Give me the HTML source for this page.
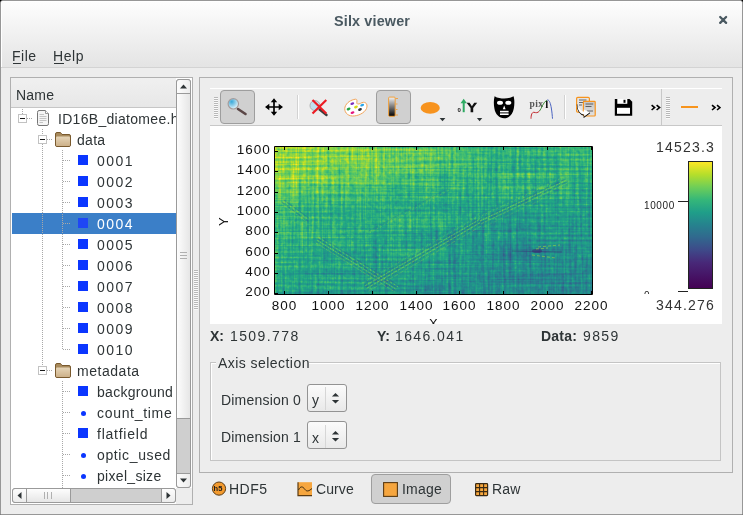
<!DOCTYPE html>
<html><head><meta charset="utf-8">
<style>
*{margin:0;padding:0;box-sizing:border-box}
html,body{width:743px;height:515px;overflow:hidden;background:#000}
body{font-family:"Liberation Sans",sans-serif;font-size:14px;color:#2e3436;position:relative}
.a{position:absolute}
.t{position:absolute;white-space:nowrap;line-height:1;will-change:transform}
.sq{position:absolute;width:10px;height:10px;background:#0b36ff}
.dot{position:absolute;width:5px;height:5px;border-radius:50%;background:#0b36ff}
.dv{position:absolute;width:1px;background:repeating-linear-gradient(#a8a8a8 0 1px,transparent 1px 2px)}
.dh{position:absolute;height:1px;background:repeating-linear-gradient(90deg,#a8a8a8 0 1px,transparent 1px 2px)}
.exp{position:absolute;width:9px;height:9px;border:1px solid #c2c2c2;background:#fff}
.exp:after{content:"";position:absolute;left:1px;top:3px;width:5px;height:1px;background:#1a1a1a}
.btnc{position:absolute;background:#d0d0d0;border:1px solid #9e9e9e;border-radius:4px}
.grip{position:absolute;background:repeating-linear-gradient(#b8b8b8 0 1px,#fafafa 1px 2px)}
.tsep{position:absolute;width:2px;background:linear-gradient(90deg,#d2d2d2 0 1px,#fff 1px 2px)}
</style></head><body>

<div class="a" style="left:0;top:0;width:743px;height:515px;background:#ededed;border:1px solid #979797;border-radius:3px 3px 0 0;overflow:hidden"><div class="a" style="left:0;top:0;width:741px;height:66px;background:linear-gradient(#fdfdfd,#e4e4e4);border-top:1px solid #fff;border-left:1px solid #fff"></div><div class="a" style="left:0;top:66px;width:741px;height:1px;background:#d3d3d3"></div></div>
<div class="t" style="left:334px;top:14px;font-weight:bold;font-size:14.4px;color:#4a5961;letter-spacing:0.15px">Silx viewer</div>
<svg class="a" style="left:718px;top:15px" width="11" height="10" viewBox="0 0 11 10"><path d="M2.2 2L8.1 7.9M8.1 2L2.2 7.9" stroke="#4a5961" stroke-width="2.3" stroke-linecap="round"/></svg>
<div class="t" style="left:12px;top:49px;letter-spacing:0.5px">File</div><div class="a" style="left:13px;top:63px;width:8px;height:1px;background:#2e3436"></div>
<div class="t" style="left:53px;top:49px;letter-spacing:0.6px">Help</div><div class="a" style="left:54px;top:63px;width:10px;height:1px;background:#2e3436"></div>
<div class="a" style="left:10px;top:77px;width:183px;height:428px;background:#fff;border:1px solid #b0b0b0"></div>
<div class="a" style="left:11px;top:78px;width:165px;height:30px;background:linear-gradient(#f0f0f0,#e7e7e7);border-bottom:1px solid #c6c6c6"></div>
<div class="t" style="left:16px;top:88px;letter-spacing:0.2px">Name</div>
<div class="a" style="left:11px;top:108px;width:165px;height:380px;overflow:hidden">
<div class="a" style="left:1px;top:105px;width:164px;height:21px;background:#3b7fc8"></div>
<div class="dv" style="left:11px;top:1px;width:1px;height:5px;"></div>
<div class="dh" style="left:16px;top:10px;width:6px;height:1px;"></div>
<div class="dv" style="left:31px;top:21px;width:1px;height:6px;"></div>
<div class="dv" style="left:31px;top:36px;width:1px;height:222px;"></div>
<div class="dv" style="left:51px;top:42px;width:1px;height:200px;"></div>
<div class="dv" style="left:51px;top:273px;width:1px;height:110px;"></div>
<svg class="a" style="left:25px;top:2px" width="14" height="16" viewBox="0 0 14 16"><defs><linearGradient id="fg" x1="0" y1="0" x2="0" y2="1"><stop offset="0" stop-color="#e6d5b8"/><stop offset="1" stop-color="#cdb189"/></linearGradient></defs><path d="M1.5 2.5Q1.5 0.5 3 0.5H9.5L12.5 3.5V13.5Q12.5 15.5 11 15.5H3Q1.5 15.5 1.5 13.5Z" fill="#f5f5f5" stroke="#757575"/><path d="M9.5 0.5V3.5H12.5" fill="#fff" stroke="#999"/><path d="M3.5 4.5H8M3.5 6.5H10.5M3.5 8.5H10.5M3.5 10.5H10.5M3.5 12.5H7" stroke="#c4c4c4"/></svg>
<div class="exp" style="left:7px;top:6px"></div>
<div class="t" style="left:47px;top:4px;color:#2e3436;letter-spacing:0.3px">ID16B_diatomee.h5</div>
<div class="exp" style="left:27px;top:27px"></div>
<div class="dh" style="left:36px;top:31px;width:6px;height:1px;"></div>
<svg class="a" style="left:44px;top:24px" width="16" height="15" viewBox="0 0 16 15"><path d="M0.5 2Q0.5 0.5 2 0.5H5.5L7 2.5H14Q15.5 2.5 15.5 4V13Q15.5 14.5 14 14.5H2Q0.5 14.5 0.5 13Z" fill="#a88a5c" stroke="#7a5a2e"/><path d="M1 5.5Q1 4.5 2 4.5H14Q15 4.5 15 5.5V13Q15 14 14 14H2Q1 14 1 13Z" fill="url(#fg)"/></svg>
<div class="t" style="left:66px;top:25px;color:#2e3436;letter-spacing:0.3px">data</div>
<div class="dh" style="left:52px;top:52px;width:8px;height:1px;"></div>
<div class="sq" style="left:67px;top:47px;background:#0b36ff"></div>
<div class="t" style="left:86px;top:46px;color:#2e3436;letter-spacing:1.5px">0001</div>
<div class="dh" style="left:52px;top:73px;width:8px;height:1px;"></div>
<div class="sq" style="left:67px;top:68px;background:#0b36ff"></div>
<div class="t" style="left:86px;top:67px;color:#2e3436;letter-spacing:1.5px">0002</div>
<div class="dh" style="left:52px;top:94px;width:8px;height:1px;"></div>
<div class="sq" style="left:67px;top:89px;background:#0b36ff"></div>
<div class="t" style="left:86px;top:88px;color:#2e3436;letter-spacing:1.5px">0003</div>
<div class="dh" style="left:52px;top:115px;width:8px;height:1px;"></div>
<div class="sq" style="left:67px;top:110px;background:#1f47f5"></div>
<div class="t" style="left:86px;top:109px;color:#fff;letter-spacing:1.5px">0004</div>
<div class="dh" style="left:52px;top:136px;width:8px;height:1px;"></div>
<div class="sq" style="left:67px;top:131px;background:#0b36ff"></div>
<div class="t" style="left:86px;top:130px;color:#2e3436;letter-spacing:1.5px">0005</div>
<div class="dh" style="left:52px;top:157px;width:8px;height:1px;"></div>
<div class="sq" style="left:67px;top:152px;background:#0b36ff"></div>
<div class="t" style="left:86px;top:151px;color:#2e3436;letter-spacing:1.5px">0006</div>
<div class="dh" style="left:52px;top:178px;width:8px;height:1px;"></div>
<div class="sq" style="left:67px;top:173px;background:#0b36ff"></div>
<div class="t" style="left:86px;top:172px;color:#2e3436;letter-spacing:1.5px">0007</div>
<div class="dh" style="left:52px;top:199px;width:8px;height:1px;"></div>
<div class="sq" style="left:67px;top:194px;background:#0b36ff"></div>
<div class="t" style="left:86px;top:193px;color:#2e3436;letter-spacing:1.5px">0008</div>
<div class="dh" style="left:52px;top:220px;width:8px;height:1px;"></div>
<div class="sq" style="left:67px;top:215px;background:#0b36ff"></div>
<div class="t" style="left:86px;top:214px;color:#2e3436;letter-spacing:1.5px">0009</div>
<div class="dh" style="left:52px;top:241px;width:8px;height:1px;"></div>
<div class="sq" style="left:67px;top:236px;background:#0b36ff"></div>
<div class="t" style="left:86px;top:235px;color:#2e3436;letter-spacing:1.5px">0010</div>
<div class="exp" style="left:27px;top:258px"></div>
<div class="dh" style="left:36px;top:262px;width:6px;height:1px;"></div>
<svg class="a" style="left:44px;top:255px" width="16" height="15" viewBox="0 0 16 15"><path d="M0.5 2Q0.5 0.5 2 0.5H5.5L7 2.5H14Q15.5 2.5 15.5 4V13Q15.5 14.5 14 14.5H2Q0.5 14.5 0.5 13Z" fill="#a88a5c" stroke="#7a5a2e"/><path d="M1 5.5Q1 4.5 2 4.5H14Q15 4.5 15 5.5V13Q15 14 14 14H2Q1 14 1 13Z" fill="url(#fg)"/></svg>
<div class="t" style="left:66px;top:256px;color:#2e3436;letter-spacing:0.53px">metadata</div>
<div class="dh" style="left:52px;top:283px;width:8px;height:1px;"></div>
<div class="sq" style="left:67px;top:278px;background:#0b36ff"></div>
<div class="t" style="left:86px;top:277px;color:#2e3436;letter-spacing:0.3px">background</div>
<div class="dh" style="left:52px;top:304px;width:8px;height:1px;"></div>
<div class="dot" style="left:69.5px;top:302.5px"></div>
<div class="t" style="left:86px;top:298px;color:#2e3436;letter-spacing:0.69px">count_time</div>
<div class="dh" style="left:52px;top:325px;width:8px;height:1px;"></div>
<div class="sq" style="left:67px;top:320px;background:#0b36ff"></div>
<div class="t" style="left:86px;top:319px;color:#2e3436;letter-spacing:0.76px">flatfield</div>
<div class="dh" style="left:52px;top:346px;width:8px;height:1px;"></div>
<div class="dot" style="left:69.5px;top:344.5px"></div>
<div class="t" style="left:86px;top:340px;color:#2e3436;letter-spacing:0.63px">optic_used</div>
<div class="dh" style="left:52px;top:367px;width:8px;height:1px;"></div>
<div class="dot" style="left:69.5px;top:365.5px"></div>
<div class="t" style="left:86px;top:361px;color:#2e3436;letter-spacing:0.3px">pixel_size</div>
</div>
<div class="a" style="left:176px;top:79px;width:15px;height:409px;background:#cfcfcf;border:1px solid #9a9a9a;border-radius:3px 3px 3px 3px"></div>
<div class="a" style="left:176px;top:79px;width:15px;height:15px;background:linear-gradient(90deg,#fdfdfd,#ececec);border:1px solid #9a9a9a;border-radius:3px 3px 0 0"></div>
<svg class="a" style="left:180px;top:84px" width="8" height="5"><path d="M0 4.5L3.5 0.5L7 4.5Z" fill="#2e3436"/></svg>
<div class="a" style="left:176px;top:93px;width:15px;height:326px;background:linear-gradient(90deg,#fdfdfd,#e6e6e6);border:1px solid #9a9a9a"></div>
<div class="a" style="left:180px;top:252px;width:7px;height:7px;background:repeating-linear-gradient(#b0b0b0 0 1px,transparent 1px 3px)"></div>
<div class="a" style="left:176px;top:473px;width:15px;height:15px;background:linear-gradient(90deg,#fdfdfd,#ececec);border:1px solid #9a9a9a;border-radius:0 0 3px 3px"></div>
<svg class="a" style="left:180px;top:478px" width="8" height="5"><path d="M0 0.5L3.5 4.5L7 0.5Z" fill="#2e3436"/></svg>
<div class="a" style="left:12px;top:488px;width:164px;height:15px;background:#cfcfcf;border:1px solid #9a9a9a;border-radius:3px"></div>
<div class="a" style="left:12px;top:488px;width:15px;height:15px;background:linear-gradient(#fdfdfd,#ececec);border:1px solid #9a9a9a;border-radius:3px 0 0 3px"></div>
<svg class="a" style="left:17px;top:492px" width="5" height="8"><path d="M4.5 0L0.5 3.5L4.5 7Z" fill="#2e3436"/></svg>
<div class="a" style="left:26px;top:488px;width:45px;height:15px;background:linear-gradient(#fdfdfd,#e6e6e6);border:1px solid #9a9a9a"></div>
<div class="a" style="left:44px;top:492px;width:8px;height:7px;background:repeating-linear-gradient(90deg,#b0b0b0 0 1px,transparent 1px 3.5px)"></div>
<div class="a" style="left:161px;top:488px;width:15px;height:15px;background:linear-gradient(#fdfdfd,#ececec);border:1px solid #9a9a9a;border-radius:0 3px 3px 0"></div>
<svg class="a" style="left:166px;top:492px" width="5" height="8"><path d="M0.5 0L4.5 3.5L0.5 7Z" fill="#2e3436"/></svg>
<div class="a" style="left:176px;top:488px;width:16px;height:16px;background:#ededed"></div>
<div class="grip" style="left:194px;top:270px;width:4px;height:40px"></div>
<div class="a" style="left:199px;top:77px;width:534px;height:396px;border:1px solid #b0b0b0"></div>
<div class="a" style="left:210px;top:88px;width:451px;height:1px;background:#fff"></div>
<div class="a" style="left:661px;top:88px;width:61px;height:1px;background:#fff"></div>
<div class="a" style="left:661px;top:89px;width:1px;height:36px;background:#c8c8c8"></div>
<div class="a" style="left:210px;top:125px;width:512px;height:1px;background:#c8c8c8"></div>
<div class="grip" style="left:214px;top:97px;width:4px;height:22px"></div>
<div class="grip" style="left:666px;top:97px;width:4px;height:22px"></div>
<div class="btnc" style="left:220px;top:90px;width:35px;height:34px"></div>
<div class="btnc" style="left:376px;top:90px;width:35px;height:34px"></div>
<div class="tsep" style="left:297px;top:95px;height:24px"></div>
<div class="tsep" style="left:564px;top:95px;height:24px"></div>
<svg class="a" style="left:220px;top:90px" width="35" height="34" viewBox="220 90 35 34"><defs><radialGradient id="lens" cx="0.35" cy="0.3" r="0.8"><stop offset="0" stop-color="#3aa9d9"/><stop offset="0.7" stop-color="#bfe3f3"/><stop offset="1" stop-color="#fff"/></radialGradient></defs><path d="M238 109L245.5 114" stroke="#5b4747" stroke-width="2.6" stroke-linecap="round"/><circle cx="233.3" cy="103.8" r="5.2" fill="url(#lens)" stroke="#a49c9c" stroke-width="1.2"/></svg>
<svg class="a" style="left:262px;top:95px" width="24" height="24" viewBox="262 95 24 24"><path d="M268 107H280M274 101V113" stroke="#000" stroke-width="1.7"/><path d="M265 107L269.3 103.8V110.2Z M283 107L278.7 103.8V110.2Z M274 98.2L270.8 102.3H277.2Z M274 115.8L270.8 111.7H277.2Z" fill="#000"/></svg>
<svg class="a" style="left:305px;top:95px" width="26" height="24" viewBox="305 95 26 24"><path d="M319 109L326.5 115" stroke="#3b3b3b" stroke-width="2.4" stroke-linecap="round"/><circle cx="315" cy="105.6" r="5" fill="#bfe0ef" stroke="#b0b0b0" stroke-width="1"/><path d="M312.5 100L326.3 113.5M326.3 100L312.5 113.5" stroke="#ec1c24" stroke-width="2.2"/></svg>
<svg class="a" style="left:343px;top:97px" width="26" height="21" viewBox="343 97 26 21"><path d="M355.5 99.2C351 99.8 346.5 102.5 345 107C343.8 111.5 347 115.8 352.5 116C358 116.2 364.5 113 366.5 108.5C367.8 105 366.5 102.3 363.5 102.3C361.5 102.3 359.5 104.5 357.5 104C356 103.6 357.5 100.8 356.8 99.8C356.5 99.3 356 99.2 355.5 99.2Z" fill="#fff" stroke="#f2a55a" stroke-width="1"/><ellipse cx="352.3" cy="103.6" rx="2" ry="1.2" fill="#7b2fbe" transform="rotate(-20 352.3 103.6)"/><ellipse cx="362.2" cy="105.2" rx="2" ry="1.2" fill="#2aa6e8" transform="rotate(-20 362.2 105.2)"/><ellipse cx="356" cy="107" rx="2" ry="1.2" fill="#d8dc1a" transform="rotate(-20 356 107)"/><ellipse cx="348.6" cy="109" rx="2" ry="1.2" fill="#22a344" transform="rotate(-20 348.6 109)"/><ellipse cx="360" cy="109.5" rx="2" ry="1.2" fill="#333" transform="rotate(-20 360 109.5)"/><ellipse cx="352.5" cy="112.6" rx="2" ry="1.2" fill="#e5177e" transform="rotate(-20 352.5 112.6)"/></svg>
<svg class="a" style="left:386px;top:95px" width="14" height="24" viewBox="386 95 14 24"><defs><linearGradient id="cbg" x1="0" y1="0" x2="0" y2="1"><stop offset="0" stop-color="#f4f4f4"/><stop offset="1" stop-color="#000"/></linearGradient></defs><rect x="388.6" y="97.1" width="6.6" height="19.2" rx="1" fill="url(#cbg)" stroke="#f0a03c" stroke-width="1"/><path d="M395.5 98.5H398M395.5 104H397.5M395.5 109.5H397.5M395.5 115H398" stroke="#f0a03c" stroke-width="0.9"/></svg>
<svg class="a" style="left:418px;top:98px" width="30" height="26" viewBox="418 98 30 26"><ellipse cx="430.2" cy="107.9" rx="9.6" ry="5.9" fill="#f7931e"/><path d="M439.6 118L445.4 118L442.5 121.2Z" fill="#2e3436"/></svg>
<svg class="a" style="left:456px;top:96px;will-change:transform" width="28" height="28" viewBox="456 96 28 28"><text x="457.6" y="112.4" font-family="Liberation Sans" font-weight="bold" font-size="6" fill="#111">0</text><path d="M463.7 102.5V112.2" stroke="#2eaa62" stroke-width="2"/><path d="M460.5 103.2L463.7 98.8L466.9 103.2Z" fill="#2eaa62"/><path d="M466.6 102.8L470.6 108V112.2H473.2V108L477.2 102.8H474.2L471.9 106.2L469.6 102.8Z" fill="#111"/><path d="M476.9 118L482.3 118L479.6 121.3Z" fill="#2e3436"/></svg>
<svg class="a" style="left:493px;top:95px" width="22" height="25" viewBox="493 95 22 25"><path d="M494.6 96.2C497.5 98 501 98.6 504.1 98.6C507.2 98.6 510.7 98 513.6 96.2C514.6 99.5 514.6 104.5 513.8 108.5C512.8 114.5 508.8 118.2 504.1 118.2C499.4 118.2 495.4 114.5 494.4 108.5C493.6 104.5 493.6 99.5 494.6 96.2Z" fill="#000"/><ellipse cx="500" cy="102.8" rx="3" ry="2" fill="#fff"/><ellipse cx="508.3" cy="102.8" rx="3" ry="2" fill="#fff"/><path d="M504.2 105.5L505.6 109.2H502.8Z" fill="#fff"/><rect x="500" y="110.8" width="8.6" height="1.6" fill="#fff"/><rect x="500" y="113.4" width="8.6" height="1.6" fill="#fff"/></svg>
<svg class="a" style="left:528px;top:96px;will-change:transform" width="28" height="25" viewBox="528 96 28 25"><text x="529.6" y="107.3" font-family="Liberation Serif" font-weight="bold" font-size="9.5" fill="#555" letter-spacing="0.4">pix</text><text x="545.2" y="107.5" font-family="Liberation Serif" font-weight="bold" font-size="11" fill="#111">l</text><path d="M531 118.7C531 115 532 112 534 112.3C536 112.8 537.5 113.2 539.5 111" stroke="#c0282c" stroke-width="1" fill="none"/><path d="M539.5 111C542 108 543 102 547 100.2" stroke="#3f8f3c" stroke-width="1" fill="none"/><path d="M547 100.2C549 99 550.5 103 551.3 108C552 112 552.3 116 552.5 118.7" stroke="#4a63c0" stroke-width="1" fill="none"/></svg>
<svg class="a" style="left:574px;top:95px;will-change:transform" width="24" height="23" viewBox="574 95 24 23"><defs><linearGradient id="cpg" x1="0" y1="0" x2="0" y2="1"><stop offset="0" stop-color="#c4c4c4"/><stop offset="1" stop-color="#e2e2e2"/></linearGradient></defs><rect x="576.6" y="97.4" width="12.8" height="14.8" rx="1.2" fill="#e4e4e4" stroke="#f7941d" stroke-width="1.2"/><path d="M579 100H586.5M579 102.5H583M579 105H582" stroke="#555" stroke-width="0.9"/><rect x="583.4" y="101.3" width="11.8" height="14.7" rx="0.8" fill="url(#cpg)" stroke="#f7941d" stroke-width="1.2"/><path d="M585.5 104H593.2M585.5 106.5H591.5M587 111H593" stroke="#555" stroke-width="0.9"/><path d="M577.3 104.5C577.5 110.5 580 114.5 584.4 115.2L584.2 117L589.8 112.8" fill="none" stroke="#111" stroke-width="1.1"/><path d="M577.5 103C578 108 580.5 110.8 584 111.6L583.6 109.4L589.6 112.6L584 116.4L584.3 114.4C580 113.9 577 110 577.5 103Z" fill="#fff"/></svg>
<svg class="a" style="left:614px;top:98px" width="19" height="19" viewBox="614 98 19 19"><path d="M614.8 99H629.5L632.2 101.8V115.8H614.8Z" fill="#000"/><rect x="617.3" y="99" width="10" height="4.8" fill="#fff"/><rect x="623.5" y="99.8" width="2" height="3" fill="#000"/><rect x="617" y="107.8" width="13" height="6" fill="#fff"/></svg>
<svg class="a" style="left:651px;top:104px" width="10" height="7" viewBox="651 104 10 7"><path d="M651.6 105.2L654.6 107.6L651.6 110M656.6 105.2L659.6 107.6L656.6 110" stroke="#000" stroke-width="1.6" fill="none"/></svg>
<div class="a" style="left:681px;top:106px;width:17px;height:2px;background:#f7941d"></div>
<svg class="a" style="left:711px;top:104px" width="10" height="7" viewBox="711 104 10 7"><path d="M712 105.2L715 107.6L712 110M717 105.2L720 107.6L717 110" stroke="#000" stroke-width="1.6" fill="none"/></svg>
<div class="a" style="left:210px;top:126px;width:512px;height:198px;background:#fff;overflow:hidden">
<svg class="a" style="left:65px;top:21px" width="317" height="147" viewBox="0 0 317 147">
<defs>
<filter id="hm" x="-40" y="-40" width="397" height="227" filterUnits="userSpaceOnUse" color-interpolation-filters="sRGB">
<feGaussianBlur in="SourceGraphic" stdDeviation="5" result="base"/>
<feTurbulence type="fractalNoise" baseFrequency="0.3 0.3" numOctaves="2" seed="3" result="n1"/><feColorMatrix in="n1" type="matrix" values="1 0 0 0 0 1 0 0 0 0 1 0 0 0 0 0 0 0 0 1" result="n1g"/>
<feTurbulence type="fractalNoise" baseFrequency="0.38 0.015" numOctaves="2" seed="7" result="n2"/><feColorMatrix in="n2" type="matrix" values="1 0 0 0 0 1 0 0 0 0 1 0 0 0 0 0 0 0 0 1" result="n2g"/>
<feTurbulence type="fractalNoise" baseFrequency="0.01 0.42" numOctaves="2" seed="11" result="n3"/><feColorMatrix in="n3" type="matrix" values="1 0 0 0 0 1 0 0 0 0 1 0 0 0 0 0 0 0 0 1" result="n3g"/>
<feComposite in="base" in2="n1g" operator="arithmetic" k1="0" k2="1" k3="0.2" k4="-0.1" result="c1"/>
<feComposite in="c1" in2="n2g" operator="arithmetic" k1="0" k2="1" k3="0.34" k4="-0.17" result="c2"/>
<feComposite in="c2" in2="n3g" operator="arithmetic" k1="0" k2="1" k3="0.3" k4="-0.15" result="c3"/>
<feComponentTransfer in="c3"><feFuncR type="table" tableValues="0.267 0.282 0.255 0.208 0.165 0.129 0.133 0.267 0.478 0.741 0.992"/><feFuncG type="table" tableValues="0.004 0.141 0.267 0.373 0.471 0.569 0.659 0.749 0.820 0.875 0.906"/><feFuncB type="table" tableValues="0.329 0.459 0.529 0.553 0.557 0.549 0.518 0.439 0.318 0.149 0.145"/><feFuncA type="identity"/></feComponentTransfer>
</filter></defs>
<g filter="url(#hm)">
<rect x="-19.8" y="-18.4" width="20.3" height="18.9" fill="rgb(212,212,212)"/>
<rect x="0.0" y="-18.4" width="20.3" height="18.9" fill="rgb(212,212,212)"/>
<rect x="19.8" y="-18.4" width="20.3" height="18.9" fill="rgb(209,209,209)"/>
<rect x="39.6" y="-18.4" width="20.3" height="18.9" fill="rgb(204,204,204)"/>
<rect x="59.4" y="-18.4" width="20.3" height="18.9" fill="rgb(204,204,204)"/>
<rect x="79.2" y="-18.4" width="20.3" height="18.9" fill="rgb(204,204,204)"/>
<rect x="99.1" y="-18.4" width="20.3" height="18.9" fill="rgb(199,199,199)"/>
<rect x="118.9" y="-18.4" width="20.3" height="18.9" fill="rgb(194,194,194)"/>
<rect x="138.7" y="-18.4" width="20.3" height="18.9" fill="rgb(186,186,186)"/>
<rect x="158.5" y="-18.4" width="20.3" height="18.9" fill="rgb(178,178,178)"/>
<rect x="178.3" y="-18.4" width="20.3" height="18.9" fill="rgb(173,173,173)"/>
<rect x="198.1" y="-18.4" width="20.3" height="18.9" fill="rgb(168,168,168)"/>
<rect x="217.9" y="-18.4" width="20.3" height="18.9" fill="rgb(168,168,168)"/>
<rect x="237.8" y="-18.4" width="20.3" height="18.9" fill="rgb(168,168,168)"/>
<rect x="257.6" y="-18.4" width="20.3" height="18.9" fill="rgb(168,168,168)"/>
<rect x="277.4" y="-18.4" width="20.3" height="18.9" fill="rgb(168,168,168)"/>
<rect x="297.2" y="-18.4" width="20.3" height="18.9" fill="rgb(168,168,168)"/>
<rect x="317.0" y="-18.4" width="20.3" height="18.9" fill="rgb(168,168,168)"/>
<rect x="-19.8" y="0.0" width="20.3" height="18.9" fill="rgb(212,212,212)"/>
<rect x="0.0" y="0.0" width="20.3" height="18.9" fill="rgb(212,212,212)"/>
<rect x="19.8" y="0.0" width="20.3" height="18.9" fill="rgb(209,209,209)"/>
<rect x="39.6" y="0.0" width="20.3" height="18.9" fill="rgb(204,204,204)"/>
<rect x="59.4" y="0.0" width="20.3" height="18.9" fill="rgb(204,204,204)"/>
<rect x="79.2" y="0.0" width="20.3" height="18.9" fill="rgb(204,204,204)"/>
<rect x="99.1" y="0.0" width="20.3" height="18.9" fill="rgb(199,199,199)"/>
<rect x="118.9" y="0.0" width="20.3" height="18.9" fill="rgb(194,194,194)"/>
<rect x="138.7" y="0.0" width="20.3" height="18.9" fill="rgb(186,186,186)"/>
<rect x="158.5" y="0.0" width="20.3" height="18.9" fill="rgb(178,178,178)"/>
<rect x="178.3" y="0.0" width="20.3" height="18.9" fill="rgb(173,173,173)"/>
<rect x="198.1" y="0.0" width="20.3" height="18.9" fill="rgb(168,168,168)"/>
<rect x="217.9" y="0.0" width="20.3" height="18.9" fill="rgb(168,168,168)"/>
<rect x="237.8" y="0.0" width="20.3" height="18.9" fill="rgb(168,168,168)"/>
<rect x="257.6" y="0.0" width="20.3" height="18.9" fill="rgb(168,168,168)"/>
<rect x="277.4" y="0.0" width="20.3" height="18.9" fill="rgb(168,168,168)"/>
<rect x="297.2" y="0.0" width="20.3" height="18.9" fill="rgb(168,168,168)"/>
<rect x="317.0" y="0.0" width="20.3" height="18.9" fill="rgb(168,168,168)"/>
<rect x="-19.8" y="18.4" width="20.3" height="18.9" fill="rgb(212,212,212)"/>
<rect x="0.0" y="18.4" width="20.3" height="18.9" fill="rgb(212,212,212)"/>
<rect x="19.8" y="18.4" width="20.3" height="18.9" fill="rgb(204,204,204)"/>
<rect x="39.6" y="18.4" width="20.3" height="18.9" fill="rgb(199,199,199)"/>
<rect x="59.4" y="18.4" width="20.3" height="18.9" fill="rgb(194,194,194)"/>
<rect x="79.2" y="18.4" width="20.3" height="18.9" fill="rgb(194,194,194)"/>
<rect x="99.1" y="18.4" width="20.3" height="18.9" fill="rgb(189,189,189)"/>
<rect x="118.9" y="18.4" width="20.3" height="18.9" fill="rgb(184,184,184)"/>
<rect x="138.7" y="18.4" width="20.3" height="18.9" fill="rgb(176,176,176)"/>
<rect x="158.5" y="18.4" width="20.3" height="18.9" fill="rgb(168,168,168)"/>
<rect x="178.3" y="18.4" width="20.3" height="18.9" fill="rgb(166,166,166)"/>
<rect x="198.1" y="18.4" width="20.3" height="18.9" fill="rgb(163,163,163)"/>
<rect x="217.9" y="18.4" width="20.3" height="18.9" fill="rgb(163,163,163)"/>
<rect x="237.8" y="18.4" width="20.3" height="18.9" fill="rgb(163,163,163)"/>
<rect x="257.6" y="18.4" width="20.3" height="18.9" fill="rgb(168,168,168)"/>
<rect x="277.4" y="18.4" width="20.3" height="18.9" fill="rgb(168,168,168)"/>
<rect x="297.2" y="18.4" width="20.3" height="18.9" fill="rgb(163,163,163)"/>
<rect x="317.0" y="18.4" width="20.3" height="18.9" fill="rgb(163,163,163)"/>
<rect x="-19.8" y="36.8" width="20.3" height="18.9" fill="rgb(194,194,194)"/>
<rect x="0.0" y="36.8" width="20.3" height="18.9" fill="rgb(194,194,194)"/>
<rect x="19.8" y="36.8" width="20.3" height="18.9" fill="rgb(184,184,184)"/>
<rect x="39.6" y="36.8" width="20.3" height="18.9" fill="rgb(178,178,178)"/>
<rect x="59.4" y="36.8" width="20.3" height="18.9" fill="rgb(178,178,178)"/>
<rect x="79.2" y="36.8" width="20.3" height="18.9" fill="rgb(173,173,173)"/>
<rect x="99.1" y="36.8" width="20.3" height="18.9" fill="rgb(173,173,173)"/>
<rect x="118.9" y="36.8" width="20.3" height="18.9" fill="rgb(168,168,168)"/>
<rect x="138.7" y="36.8" width="20.3" height="18.9" fill="rgb(163,163,163)"/>
<rect x="158.5" y="36.8" width="20.3" height="18.9" fill="rgb(158,158,158)"/>
<rect x="178.3" y="36.8" width="20.3" height="18.9" fill="rgb(153,153,153)"/>
<rect x="198.1" y="36.8" width="20.3" height="18.9" fill="rgb(153,153,153)"/>
<rect x="217.9" y="36.8" width="20.3" height="18.9" fill="rgb(153,153,153)"/>
<rect x="237.8" y="36.8" width="20.3" height="18.9" fill="rgb(153,153,153)"/>
<rect x="257.6" y="36.8" width="20.3" height="18.9" fill="rgb(158,158,158)"/>
<rect x="277.4" y="36.8" width="20.3" height="18.9" fill="rgb(158,158,158)"/>
<rect x="297.2" y="36.8" width="20.3" height="18.9" fill="rgb(153,153,153)"/>
<rect x="317.0" y="36.8" width="20.3" height="18.9" fill="rgb(153,153,153)"/>
<rect x="-19.8" y="55.1" width="20.3" height="18.9" fill="rgb(173,173,173)"/>
<rect x="0.0" y="55.1" width="20.3" height="18.9" fill="rgb(173,173,173)"/>
<rect x="19.8" y="55.1" width="20.3" height="18.9" fill="rgb(163,163,163)"/>
<rect x="39.6" y="55.1" width="20.3" height="18.9" fill="rgb(163,163,163)"/>
<rect x="59.4" y="55.1" width="20.3" height="18.9" fill="rgb(158,158,158)"/>
<rect x="79.2" y="55.1" width="20.3" height="18.9" fill="rgb(158,158,158)"/>
<rect x="99.1" y="55.1" width="20.3" height="18.9" fill="rgb(158,158,158)"/>
<rect x="118.9" y="55.1" width="20.3" height="18.9" fill="rgb(158,158,158)"/>
<rect x="138.7" y="55.1" width="20.3" height="18.9" fill="rgb(153,153,153)"/>
<rect x="158.5" y="55.1" width="20.3" height="18.9" fill="rgb(153,153,153)"/>
<rect x="178.3" y="55.1" width="20.3" height="18.9" fill="rgb(148,148,148)"/>
<rect x="198.1" y="55.1" width="20.3" height="18.9" fill="rgb(148,148,148)"/>
<rect x="217.9" y="55.1" width="20.3" height="18.9" fill="rgb(143,143,143)"/>
<rect x="237.8" y="55.1" width="20.3" height="18.9" fill="rgb(143,143,143)"/>
<rect x="257.6" y="55.1" width="20.3" height="18.9" fill="rgb(143,143,143)"/>
<rect x="277.4" y="55.1" width="20.3" height="18.9" fill="rgb(143,143,143)"/>
<rect x="297.2" y="55.1" width="20.3" height="18.9" fill="rgb(143,143,143)"/>
<rect x="317.0" y="55.1" width="20.3" height="18.9" fill="rgb(143,143,143)"/>
<rect x="-19.8" y="73.5" width="20.3" height="18.9" fill="rgb(168,168,168)"/>
<rect x="0.0" y="73.5" width="20.3" height="18.9" fill="rgb(168,168,168)"/>
<rect x="19.8" y="73.5" width="20.3" height="18.9" fill="rgb(163,163,163)"/>
<rect x="39.6" y="73.5" width="20.3" height="18.9" fill="rgb(163,163,163)"/>
<rect x="59.4" y="73.5" width="20.3" height="18.9" fill="rgb(158,158,158)"/>
<rect x="79.2" y="73.5" width="20.3" height="18.9" fill="rgb(158,158,158)"/>
<rect x="99.1" y="73.5" width="20.3" height="18.9" fill="rgb(153,153,153)"/>
<rect x="118.9" y="73.5" width="20.3" height="18.9" fill="rgb(153,153,153)"/>
<rect x="138.7" y="73.5" width="20.3" height="18.9" fill="rgb(148,148,148)"/>
<rect x="158.5" y="73.5" width="20.3" height="18.9" fill="rgb(148,148,148)"/>
<rect x="178.3" y="73.5" width="20.3" height="18.9" fill="rgb(143,143,143)"/>
<rect x="198.1" y="73.5" width="20.3" height="18.9" fill="rgb(140,140,140)"/>
<rect x="217.9" y="73.5" width="20.3" height="18.9" fill="rgb(138,138,138)"/>
<rect x="237.8" y="73.5" width="20.3" height="18.9" fill="rgb(138,138,138)"/>
<rect x="257.6" y="73.5" width="20.3" height="18.9" fill="rgb(138,138,138)"/>
<rect x="277.4" y="73.5" width="20.3" height="18.9" fill="rgb(138,138,138)"/>
<rect x="297.2" y="73.5" width="20.3" height="18.9" fill="rgb(133,133,133)"/>
<rect x="317.0" y="73.5" width="20.3" height="18.9" fill="rgb(133,133,133)"/>
<rect x="-19.8" y="91.9" width="20.3" height="18.9" fill="rgb(163,163,163)"/>
<rect x="0.0" y="91.9" width="20.3" height="18.9" fill="rgb(163,163,163)"/>
<rect x="19.8" y="91.9" width="20.3" height="18.9" fill="rgb(158,158,158)"/>
<rect x="39.6" y="91.9" width="20.3" height="18.9" fill="rgb(158,158,158)"/>
<rect x="59.4" y="91.9" width="20.3" height="18.9" fill="rgb(153,153,153)"/>
<rect x="79.2" y="91.9" width="20.3" height="18.9" fill="rgb(153,153,153)"/>
<rect x="99.1" y="91.9" width="20.3" height="18.9" fill="rgb(148,148,148)"/>
<rect x="118.9" y="91.9" width="20.3" height="18.9" fill="rgb(148,148,148)"/>
<rect x="138.7" y="91.9" width="20.3" height="18.9" fill="rgb(143,143,143)"/>
<rect x="158.5" y="91.9" width="20.3" height="18.9" fill="rgb(140,140,140)"/>
<rect x="178.3" y="91.9" width="20.3" height="18.9" fill="rgb(138,138,138)"/>
<rect x="198.1" y="91.9" width="20.3" height="18.9" fill="rgb(133,133,133)"/>
<rect x="217.9" y="91.9" width="20.3" height="18.9" fill="rgb(128,128,128)"/>
<rect x="237.8" y="91.9" width="20.3" height="18.9" fill="rgb(128,128,128)"/>
<rect x="257.6" y="91.9" width="20.3" height="18.9" fill="rgb(128,128,128)"/>
<rect x="277.4" y="91.9" width="20.3" height="18.9" fill="rgb(128,128,128)"/>
<rect x="297.2" y="91.9" width="20.3" height="18.9" fill="rgb(128,128,128)"/>
<rect x="317.0" y="91.9" width="20.3" height="18.9" fill="rgb(128,128,128)"/>
<rect x="-19.8" y="110.2" width="20.3" height="18.9" fill="rgb(158,158,158)"/>
<rect x="0.0" y="110.2" width="20.3" height="18.9" fill="rgb(158,158,158)"/>
<rect x="19.8" y="110.2" width="20.3" height="18.9" fill="rgb(153,153,153)"/>
<rect x="39.6" y="110.2" width="20.3" height="18.9" fill="rgb(153,153,153)"/>
<rect x="59.4" y="110.2" width="20.3" height="18.9" fill="rgb(148,148,148)"/>
<rect x="79.2" y="110.2" width="20.3" height="18.9" fill="rgb(148,148,148)"/>
<rect x="99.1" y="110.2" width="20.3" height="18.9" fill="rgb(143,143,143)"/>
<rect x="118.9" y="110.2" width="20.3" height="18.9" fill="rgb(143,143,143)"/>
<rect x="138.7" y="110.2" width="20.3" height="18.9" fill="rgb(138,138,138)"/>
<rect x="158.5" y="110.2" width="20.3" height="18.9" fill="rgb(133,133,133)"/>
<rect x="178.3" y="110.2" width="20.3" height="18.9" fill="rgb(133,133,133)"/>
<rect x="198.1" y="110.2" width="20.3" height="18.9" fill="rgb(128,128,128)"/>
<rect x="217.9" y="110.2" width="20.3" height="18.9" fill="rgb(122,122,122)"/>
<rect x="237.8" y="110.2" width="20.3" height="18.9" fill="rgb(122,122,122)"/>
<rect x="257.6" y="110.2" width="20.3" height="18.9" fill="rgb(122,122,122)"/>
<rect x="277.4" y="110.2" width="20.3" height="18.9" fill="rgb(122,122,122)"/>
<rect x="297.2" y="110.2" width="20.3" height="18.9" fill="rgb(122,122,122)"/>
<rect x="317.0" y="110.2" width="20.3" height="18.9" fill="rgb(122,122,122)"/>
<rect x="-19.8" y="128.6" width="20.3" height="18.9" fill="rgb(153,153,153)"/>
<rect x="0.0" y="128.6" width="20.3" height="18.9" fill="rgb(153,153,153)"/>
<rect x="19.8" y="128.6" width="20.3" height="18.9" fill="rgb(148,148,148)"/>
<rect x="39.6" y="128.6" width="20.3" height="18.9" fill="rgb(148,148,148)"/>
<rect x="59.4" y="128.6" width="20.3" height="18.9" fill="rgb(143,143,143)"/>
<rect x="79.2" y="128.6" width="20.3" height="18.9" fill="rgb(143,143,143)"/>
<rect x="99.1" y="128.6" width="20.3" height="18.9" fill="rgb(138,138,138)"/>
<rect x="118.9" y="128.6" width="20.3" height="18.9" fill="rgb(138,138,138)"/>
<rect x="138.7" y="128.6" width="20.3" height="18.9" fill="rgb(133,133,133)"/>
<rect x="158.5" y="128.6" width="20.3" height="18.9" fill="rgb(128,128,128)"/>
<rect x="178.3" y="128.6" width="20.3" height="18.9" fill="rgb(128,128,128)"/>
<rect x="198.1" y="128.6" width="20.3" height="18.9" fill="rgb(122,122,122)"/>
<rect x="217.9" y="128.6" width="20.3" height="18.9" fill="rgb(120,120,120)"/>
<rect x="237.8" y="128.6" width="20.3" height="18.9" fill="rgb(117,117,117)"/>
<rect x="257.6" y="128.6" width="20.3" height="18.9" fill="rgb(117,117,117)"/>
<rect x="277.4" y="128.6" width="20.3" height="18.9" fill="rgb(117,117,117)"/>
<rect x="297.2" y="128.6" width="20.3" height="18.9" fill="rgb(117,117,117)"/>
<rect x="317.0" y="128.6" width="20.3" height="18.9" fill="rgb(117,117,117)"/>
<rect x="-19.8" y="147.0" width="20.3" height="18.9" fill="rgb(153,153,153)"/>
<rect x="0.0" y="147.0" width="20.3" height="18.9" fill="rgb(153,153,153)"/>
<rect x="19.8" y="147.0" width="20.3" height="18.9" fill="rgb(148,148,148)"/>
<rect x="39.6" y="147.0" width="20.3" height="18.9" fill="rgb(148,148,148)"/>
<rect x="59.4" y="147.0" width="20.3" height="18.9" fill="rgb(143,143,143)"/>
<rect x="79.2" y="147.0" width="20.3" height="18.9" fill="rgb(143,143,143)"/>
<rect x="99.1" y="147.0" width="20.3" height="18.9" fill="rgb(138,138,138)"/>
<rect x="118.9" y="147.0" width="20.3" height="18.9" fill="rgb(138,138,138)"/>
<rect x="138.7" y="147.0" width="20.3" height="18.9" fill="rgb(133,133,133)"/>
<rect x="158.5" y="147.0" width="20.3" height="18.9" fill="rgb(128,128,128)"/>
<rect x="178.3" y="147.0" width="20.3" height="18.9" fill="rgb(128,128,128)"/>
<rect x="198.1" y="147.0" width="20.3" height="18.9" fill="rgb(122,122,122)"/>
<rect x="217.9" y="147.0" width="20.3" height="18.9" fill="rgb(120,120,120)"/>
<rect x="237.8" y="147.0" width="20.3" height="18.9" fill="rgb(117,117,117)"/>
<rect x="257.6" y="147.0" width="20.3" height="18.9" fill="rgb(117,117,117)"/>
<rect x="277.4" y="147.0" width="20.3" height="18.9" fill="rgb(117,117,117)"/>
<rect x="297.2" y="147.0" width="20.3" height="18.9" fill="rgb(117,117,117)"/>
<rect x="317.0" y="147.0" width="20.3" height="18.9" fill="rgb(117,117,117)"/>
</g>
<path d="M8.9 52.8L34.9 71.8" stroke="#2f5f8c" stroke-width="1" stroke-dasharray="3 1" opacity="0.42"/>
<path d="M8.0 54.0L34.0 73.0" stroke="#a5db36" stroke-width="1" stroke-dasharray="2 2" opacity="0.50"/>
<path d="M7.1 55.2L33.1 74.2" stroke="#2f5f8c" stroke-width="1" stroke-dasharray="4 2" opacity="0.42"/>
<path d="M6.2 56.4L32.2 75.4" stroke="#a5db36" stroke-width="1" stroke-dasharray="2 1" opacity="0.33"/>
<path d="M44.6 89.5L123.6 138.5" stroke="#2f5f8c" stroke-width="1" stroke-dasharray="3 1" opacity="0.40"/>
<path d="M43.8 90.7L122.8 139.7" stroke="#a5db36" stroke-width="1" stroke-dasharray="2 2" opacity="0.50"/>
<path d="M43.0 92.0L122.0 141.0" stroke="#2f5f8c" stroke-width="1" stroke-dasharray="4 2" opacity="0.60"/>
<path d="M42.2 93.3L121.2 142.3" stroke="#a5db36" stroke-width="1" stroke-dasharray="2 1" opacity="0.50"/>
<path d="M41.4 94.5L120.4 143.5" stroke="#2f5f8c" stroke-width="1" stroke-dasharray="3 2" opacity="0.40"/>
<path d="M40.6 95.8L119.6 144.8" stroke="#a5db36" stroke-width="1" stroke-dasharray="3 1" opacity="0.30"/>
<path d="M87.5 133.9L201.5 67.9" stroke="#2f5f8c" stroke-width="1" stroke-dasharray="3 1" opacity="0.15"/>
<path d="M88.5 135.7L202.5 69.7" stroke="#a5db36" stroke-width="1" stroke-dasharray="2 2" opacity="0.27"/>
<path d="M89.5 137.4L203.5 71.4" stroke="#2f5f8c" stroke-width="1" stroke-dasharray="4 2" opacity="0.40"/>
<path d="M90.2 138.7L204.2 72.7" stroke="#a5db36" stroke-width="1" stroke-dasharray="2 1" opacity="0.50"/>
<path d="M91.0 140.0L205.0 74.0" stroke="#2f5f8c" stroke-width="1" stroke-dasharray="3 2" opacity="0.60"/>
<path d="M91.8 141.3L205.8 75.3" stroke="#a5db36" stroke-width="1" stroke-dasharray="3 1" opacity="0.50"/>
<path d="M92.5 142.6L206.5 76.6" stroke="#2f5f8c" stroke-width="1" stroke-dasharray="2 2" opacity="0.40"/>
<path d="M93.5 144.3L207.5 78.3" stroke="#a5db36" stroke-width="1" stroke-dasharray="4 2" opacity="0.27"/>
<path d="M202.4 68.6L289.4 27.6" stroke="#2f5f8c" stroke-width="1" stroke-dasharray="3 1" opacity="0.18"/>
<path d="M203.3 70.4L290.3 29.4" stroke="#a5db36" stroke-width="1" stroke-dasharray="2 2" opacity="0.31"/>
<path d="M204.4 72.6L291.4 31.6" stroke="#2f5f8c" stroke-width="1" stroke-dasharray="4 2" opacity="0.46"/>
<path d="M205.0 74.0L292.0 33.0" stroke="#a5db36" stroke-width="1" stroke-dasharray="2 1" opacity="0.55"/>
<path d="M205.6 75.4L292.6 34.4" stroke="#2f5f8c" stroke-width="1" stroke-dasharray="3 2" opacity="0.46"/>
<path d="M206.3 76.7L293.3 35.7" stroke="#a5db36" stroke-width="1" stroke-dasharray="3 1" opacity="0.37"/>
<path d="M207.1 78.5L294.1 37.5" stroke="#2f5f8c" stroke-width="1" stroke-dasharray="2 2" opacity="0.24"/>
<path d="M208.0 80.3L295.0 39.3" stroke="#a5db36" stroke-width="1" stroke-dasharray="4 2" opacity="0.14"/>
<path d="M93.5 84.1L173.5 41.1" stroke="#2f5f8c" stroke-width="1" stroke-dasharray="3 1" opacity="0.27"/>
<path d="M94.5 85.9L174.5 42.9" stroke="#a5db36" stroke-width="1" stroke-dasharray="2 2" opacity="0.27"/>
<path d="M237 104L287 105" stroke="#3b2a72" stroke-width="1" opacity="0.45"/>
<ellipse cx="262" cy="104" rx="5" ry="2" fill="#3b2a72" opacity="0.6"/>
<path d="M263 100L285 98M257 108L281 111M261 102L273 101" stroke="#b8dc30" stroke-width="1" stroke-dasharray="3 2" opacity="0.5"/>
</svg>
<svg class="a" style="left:64px;top:20px" width="320" height="150" viewBox="274 146 320 150">
<path d="M274.5 146.5H592.5V294.5H274.5ZM274.5 151.5h3.5M274.5 171.5h3.5M274.5 192.5h3.5M274.5 212.5h3.5M274.5 232.5h3.5M274.5 253.5h3.5M274.5 273.5h3.5M274.5 293.5h3.5M284.5 146.5v3.5M284.5 294.5v-3.5M328.5 146.5v3.5M328.5 294.5v-3.5M372.5 146.5v3.5M372.5 294.5v-3.5M416.5 146.5v3.5M416.5 294.5v-3.5M459.5 146.5v3.5M459.5 294.5v-3.5M503.5 146.5v3.5M503.5 294.5v-3.5M547.5 146.5v3.5M547.5 294.5v-3.5M591.5 146.5v3.5M591.5 294.5v-3.5" stroke="#000" stroke-width="1" fill="none"/>
</svg>
<div class="t" style="left:-210px;top:-126px;width:270.8px;text-align:right;top:17.1px;font-size:13.5px;color:#111;letter-spacing:1.0px;padding-right:0">1600</div>
<div class="t" style="left:-210px;top:-126px;width:270.8px;text-align:right;top:37.4px;font-size:13.5px;color:#111;letter-spacing:1.0px;padding-right:0">1400</div>
<div class="t" style="left:-210px;top:-126px;width:270.8px;text-align:right;top:57.8px;font-size:13.5px;color:#111;letter-spacing:1.0px;padding-right:0">1200</div>
<div class="t" style="left:-210px;top:-126px;width:270.8px;text-align:right;top:78.1px;font-size:13.5px;color:#111;letter-spacing:1.0px;padding-right:0">1000</div>
<div class="t" style="left:-210px;top:-126px;width:270.8px;text-align:right;top:98.4px;font-size:13.5px;color:#111;letter-spacing:1.0px;padding-right:0">800</div>
<div class="t" style="left:-210px;top:-126px;width:270.8px;text-align:right;top:118.8px;font-size:13.5px;color:#111;letter-spacing:1.0px;padding-right:0">600</div>
<div class="t" style="left:-210px;top:-126px;width:270.8px;text-align:right;top:139.1px;font-size:13.5px;color:#111;letter-spacing:1.0px;padding-right:0">400</div>
<div class="t" style="left:-210px;top:-126px;width:270.8px;text-align:right;top:159.4px;font-size:13.5px;color:#111;letter-spacing:1.0px;padding-right:0">200</div>
<div class="t" style="left:34.4px;width:80px;text-align:center;top:172.6px;font-size:13.5px;color:#111;letter-spacing:1.0px;text-indent:1.0px">800</div>
<div class="t" style="left:78.1px;width:80px;text-align:center;top:172.6px;font-size:13.5px;color:#111;letter-spacing:1.0px;text-indent:1.0px">1000</div>
<div class="t" style="left:121.9px;width:80px;text-align:center;top:172.6px;font-size:13.5px;color:#111;letter-spacing:1.0px;text-indent:1.0px">1200</div>
<div class="t" style="left:165.6px;width:80px;text-align:center;top:172.6px;font-size:13.5px;color:#111;letter-spacing:1.0px;text-indent:1.0px">1400</div>
<div class="t" style="left:209.4px;width:80px;text-align:center;top:172.6px;font-size:13.5px;color:#111;letter-spacing:1.0px;text-indent:1.0px">1600</div>
<div class="t" style="left:253.1px;width:80px;text-align:center;top:172.6px;font-size:13.5px;color:#111;letter-spacing:1.0px;text-indent:1.0px">1800</div>
<div class="t" style="left:296.9px;width:80px;text-align:center;top:172.6px;font-size:13.5px;color:#111;letter-spacing:1.0px;text-indent:1.0px">2000</div>
<div class="t" style="left:340.6px;width:80px;text-align:center;top:172.6px;font-size:13.5px;color:#111;letter-spacing:1.0px;text-indent:1.0px">2200</div>
<div class="t" style="left:218.5px;top:191px;font-size:13px;color:#111">X</div>
<div class="t" style="left:7px;top:87px;font-size:13px;color:#111;transform:rotate(-90deg);transform-origin:6.5px 6.5px">Y</div>
<div class="a" style="left:478px;top:35px;width:25px;height:128px;border:1px solid #222;background:linear-gradient(#fde725,#b5de2b 10%,#6ece58 20%,#35b779 30%,#1f9e89 40%,#26828e 50%,#31688e 60%,#3e4989 70%,#482878 80%,#440154 100%)"></div>
<div class="a" style="left:468px;top:75px;width:10px;height:1px;background:#222"></div>
<div class="a" style="left:468px;top:165px;width:10px;height:1px;background:#222"></div>
<div class="t" style="left:434px;top:75px;font-size:10px;color:#222;letter-spacing:0.6px">10000</div>
<div class="a" style="left:434px;top:164px;width:8px;height:4px;overflow:hidden"><div class="t" style="left:0;top:1px;font-size:10px;color:#222">0</div></div>
<div class="t" style="left:445.5px;top:13.5px;font-size:14px;color:#333;letter-spacing:1.2px">14523.3</div>
<div class="t" style="left:445.5px;top:172px;font-size:14px;color:#333;letter-spacing:1.2px">344.276</div>
</div>
<div class="t" style="left:209.5px;top:328.5px;font-weight:bold;color:#2e3436">X:</div>
<div class="t" style="left:229.5px;top:328.5px;letter-spacing:1.4px">1509.778</div>
<div class="t" style="left:376.5px;top:328.5px;font-weight:bold">Y:</div>
<div class="t" style="left:394.5px;top:328.5px;letter-spacing:1.4px">1646.041</div>
<div class="t" style="left:540.5px;top:328.5px;font-weight:bold;letter-spacing:0.2px">Data:</div>
<div class="t" style="left:582.5px;top:328.5px;letter-spacing:1.4px">9859</div>
<div class="a" style="left:210px;top:362px;width:511px;height:99px;border:1px solid #c4c4c4;box-shadow:inset 1px 1px 0 #fff"></div>
<div class="a" style="left:216px;top:356px;width:93px;height:12px;background:#ededed"></div>
<div class="t" style="left:218px;top:355.5px;letter-spacing:0.45px">Axis selection</div>
<div class="t" style="left:220.5px;top:392.8px;letter-spacing:0.2px">Dimension 0</div>
<div class="a" style="left:307px;top:384.1px;width:40px;height:28px;border:1px solid #939393;border-radius:3px;background:linear-gradient(#fbfbfb,#e9e9e9)"></div>
<div class="a" style="left:325px;top:387.3px;width:1px;height:23px;background:#d6d6d6"></div>
<div class="t" style="left:312px;top:393.3px">y</div>
<svg class="a" style="left:331px;top:392.3px" width="9" height="12" viewBox="0 0 9 12"><path d="M0.9 4.6L4.5 0.9L8.1 4.6Z M0.9 7.9L4.5 11.6L8.1 7.9Z" fill="#2e3436"/></svg>
<div class="t" style="left:220.5px;top:430.0px;letter-spacing:0.2px">Dimension 1</div>
<div class="a" style="left:307px;top:421.3px;width:40px;height:28px;border:1px solid #939393;border-radius:3px;background:linear-gradient(#fbfbfb,#e9e9e9)"></div>
<div class="a" style="left:325px;top:424.5px;width:1px;height:23px;background:#d6d6d6"></div>
<div class="t" style="left:312px;top:430.5px">x</div>
<svg class="a" style="left:331px;top:429.5px" width="9" height="12" viewBox="0 0 9 12"><path d="M0.9 4.6L4.5 0.9L8.1 4.6Z M0.9 7.9L4.5 11.6L8.1 7.9Z" fill="#2e3436"/></svg>
<svg class="a" style="left:211px;top:481px;will-change:transform" width="16" height="16" viewBox="0 0 16 16"><circle cx="8" cy="7.6" r="6.6" fill="#f39a2e" stroke="#5a3a12" stroke-width="1"/><text x="2.6" y="10.4" font-family="Liberation Sans" font-weight="bold" font-size="7.5" fill="#1a1a1a">h5</text></svg>
<div class="t" style="left:229px;top:482px;letter-spacing:0.5px">HDF5</div>
<svg class="a" style="left:297px;top:481px" width="16" height="16" viewBox="0 0 16 16"><rect x="1" y="1.2" width="14" height="13.4" fill="#f6a63f"/><path d="M1 1.2V14.6H15" stroke="#5b3b12" stroke-width="1.2" fill="none"/><path d="M1.5 9C3.5 5 5.5 5 8 8.5C10 11 12 10 15 7.5" stroke="#3b2a10" stroke-width="1" fill="none"/></svg>
<div class="t" style="left:315.5px;top:482px;letter-spacing:0.1px">Curve</div>
<div class="btnc" style="left:371px;top:474px;width:80px;height:30px"></div>
<svg class="a" style="left:383px;top:482px" width="15" height="15" viewBox="0 0 15 15"><rect x="0.6" y="0.6" width="13.8" height="13.8" fill="#f6a63f" stroke="#5b3b12" stroke-width="1.1"/></svg>
<div class="t" style="left:401.5px;top:482px;letter-spacing:0.2px">Image</div>
<svg class="a" style="left:475px;top:483px" width="14" height="14" viewBox="0 0 14 14"><rect x="0.6" y="0.6" width="12" height="12" rx="0.8" fill="#f8a83e" stroke="#3a2a14" stroke-width="1.2"/><path d="M4.6 0.6V12.6M8.6 0.6V12.6M0.6 4.6H12.6M0.6 8.6H12.6" stroke="#3a2a14" stroke-width="1.1"/></svg>
<div class="t" style="left:491.5px;top:482px;letter-spacing:0.2px">Raw</div>
</body></html>
